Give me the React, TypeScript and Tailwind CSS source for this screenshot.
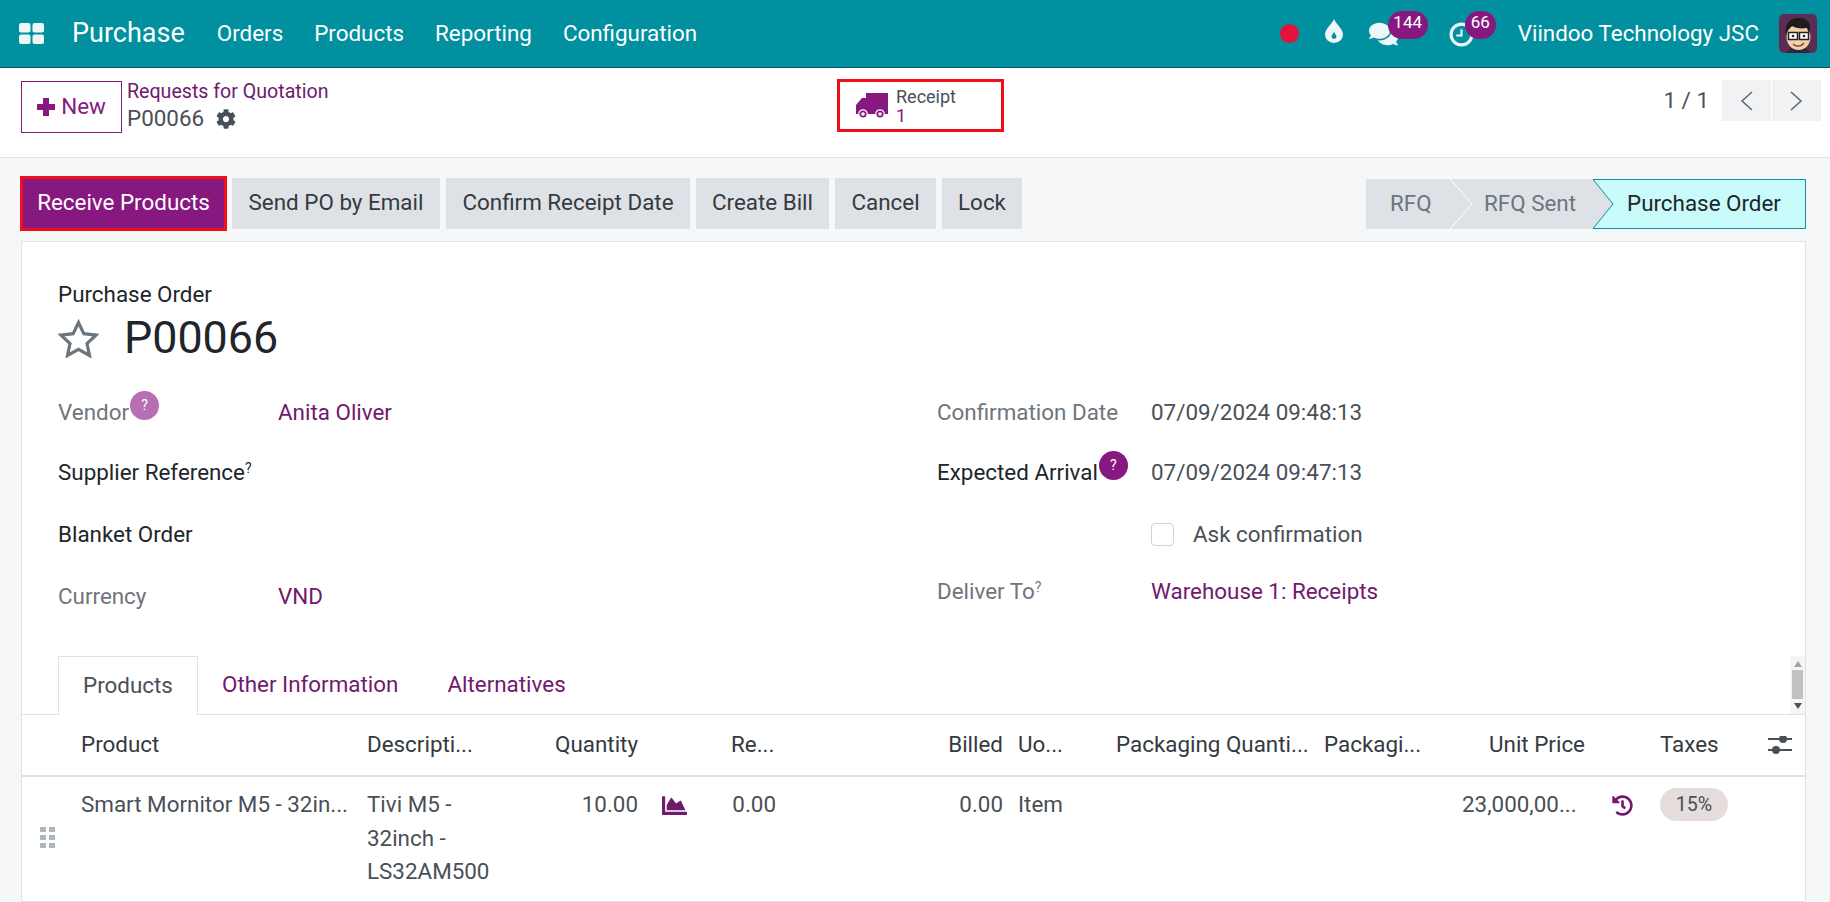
import { FaCog, FaComments, FaChartArea, FaHistory } from "react-icons/fa";

const tableCols =
  "grid grid-cols-[59px_286px_172px_99px_93px_45px_227px_113px_208px_138px_123px_75px_108px_37px]";

function HelpBadge({ faded }: { faded?: boolean }) {
  return (
    <span
      className={`ml-px mb-[16px] flex h-[29px] w-[29px] items-center justify-center rounded-full text-[14px] text-white ${
        faded ? "bg-[#b86fb2]" : "bg-[#87187f]"
      }`}
    >
      ?
    </span>
  );
}

function ActionButton({ label, className }: { label: string; className: string }) {
  return (
    <button className={`flex h-[51px] items-center justify-center bg-[#dee2e6] pb-[2px] text-[#343a40] ${className}`}>
      {label}
    </button>
  );
}

function Avatar() {
  return (
    <svg viewBox="0 0 38 39" className="h-[39px] w-[38px]">
      <rect width="38" height="39" rx="5" fill="#5b2d55" />
      <path d="M8 39c1-5 6-7 11-7s10 2 11 7z" fill="#3a2238" />
      <ellipse cx="19.5" cy="23" rx="12" ry="13" fill="#f5cfa8" />
      <path d="M7 21c-2-10 3-17 13-17 7 0 12 4 11 11l-1 5-2-6c-6 1-12 0-15-2-2 2-5 4-6 9z" fill="#1f1b1f" />
      <rect x="9.5" y="18.5" width="9" height="7" fill="#fff" stroke="#222" strokeWidth="1.5" />
      <rect x="20.5" y="18.5" width="9" height="7" fill="#fff" stroke="#222" strokeWidth="1.5" />
      <circle cx="14" cy="22" r="1.3" fill="#222" />
      <circle cx="25" cy="22" r="1.3" fill="#222" />
      <path d="M14 30c3 3 8 3 11-1" fill="none" stroke="#6b3a2a" strokeWidth="1.3" />
    </svg>
  );
}

function Chevron({ d }: { d: string }) {
  return (
    <svg viewBox="0 0 13 20" className="h-[20px] w-[13px]" fill="none" stroke="#5f666d" strokeWidth="1.5">
      <path d={d} />
    </svg>
  );
}

export default function App() {
  return (
    <div className="flex h-[902px] w-[1830px] flex-col overflow-hidden bg-[#f6f7f9] font-['Roboto',sans-serif] text-[22.4px] text-[#495057]">
      {/* Navbar */}
      <nav className="flex h-[68px] shrink-0 items-center border-b border-[#0b5560] bg-[#01909f] text-white">
        <svg viewBox="0 0 25 21" className="ml-[19px] h-[21px] w-[25px]" fill="#eef7f8">
          <rect width="11.5" height="9.5" rx="2" />
          <rect x="13.5" width="11.5" height="9.5" rx="2" />
          <rect y="11.5" width="11.5" height="9.5" rx="2" />
          <rect x="13.5" y="11.5" width="11.5" height="9.5" rx="2" />
        </svg>
        <span className="ml-[28px] text-[27px] leading-none">Purchase</span>
        <div className="ml-[32px] flex gap-[31px]">
          <span>Orders</span>
          <span>Products</span>
          <span>Reporting</span>
          <span>Configuration</span>
        </div>
        <div className="ml-auto flex items-center">
          <span className="h-[19px] w-[19px] rounded-full bg-[#e4113a]" />
          <svg viewBox="0 0 18 24" className="mb-[6px] ml-[26px] h-[24px] w-[18px]">
            <path d="M9 0c2 5 9 10 9 15.500a9 8.500 0 0 1-18 0C0 10 7 5 9 0z" fill="#eef7f8" />
            <path d="M9 13c1 2 2.500 3 2.500 4.500a2.500 2.500 0 0 1-5 0C6.500 16 8 15 9 13z" fill="#01909f" />
          </svg>
          <div className="relative ml-[26px] h-[28px] w-[59px]">
            <FaComments className="mt-[1px] h-[26px] w-[29px] text-[#eef7f8]" />
            <span className="absolute top-[-9px] left-[19px] flex h-[28px] w-[40px] items-center justify-center rounded-full bg-[#87187f] pb-[3px] text-[17px]">
              144
            </span>
          </div>
          <div className="relative ml-[21px] h-[28px] w-[47px]">
            <svg viewBox="0 0 24 24" className="mt-[2px] h-[25px] w-[25px]" fill="none" stroke="#eef7f8" strokeWidth="3">
              <circle cx="12" cy="12" r="10" />
              <path d="M12 7v6h-5" strokeWidth="2" />
            </svg>
            <span className="absolute top-[-9px] left-[16px] flex h-[28px] w-[31px] items-center justify-center rounded-full bg-[#87187f] pb-[3px] text-[17px]">
              66
            </span>
          </div>
          <span className="ml-[22px]">Viindoo Technology JSC</span>
          <span className="mr-[13px] ml-[20px]">
            <Avatar />
          </span>
        </div>
      </nav>

      {/* Control panel */}
      <header className="flex h-[90px] shrink-0 items-start border-b border-[#dfe2e6] bg-white pl-[21px]">
        <button className="mt-[13px] flex h-[52px] w-[101px] items-center justify-center border border-[#87187f] text-[#87187f]">
          <svg viewBox="0 0 18 18" className="h-[18px] w-[18px]" fill="currentColor">
            <path d="M6 0h6v6h6v6h-6v6H6v-6H0V6h6z" />
          </svg>
          <span className="ml-[6px]">New</span>
        </button>
        <div className="mt-[11px] ml-[5px] w-[710px]">
          <div className="text-[19.6px] leading-[26px] text-[#71196b]">Requests for Quotation</div>
          <div className="flex h-[27px] items-center">
            P00066
            <FaCog className="ml-[12px] h-[20px] w-[20px]" />
          </div>
        </div>
        <div className="mt-[11px] flex h-[53px] w-[167px] items-center border-[3px] border-[#ee0f1a] pl-[16px]">
          <svg viewBox="0 0 32 26" className="h-[26px] w-[32px]">
            <path d="M10 0h22v21H0v-9l6-7h4z" fill="#87187f" />
            <circle cx="7" cy="21" r="4.200" fill="#87187f" stroke="#fff" strokeWidth="1.200" />
            <circle cx="7" cy="21" r="1.800" fill="#fff" />
            <circle cx="24" cy="21" r="4.200" fill="#87187f" stroke="#fff" strokeWidth="1.200" />
            <circle cx="24" cy="21" r="1.800" fill="#fff" />
          </svg>
          <div className="ml-[8px] text-[18px] leading-[19px]">
            <div>Receipt</div>
            <div className="text-[#87187f]">1</div>
          </div>
        </div>
        <div className="mt-[12px] ml-auto flex items-center pr-[9px]">
          <span>1 / 1</span>
          <button className="ml-[13px] flex h-[41px] w-[49px] items-center justify-center bg-[#f1f2f3]">
            <Chevron d="M12 1L2 10l10 9" />
          </button>
          <button className="ml-px flex h-[41px] w-[49px] items-center justify-center bg-[#f1f2f3]">
            <Chevron d="M1 1l10 9-10 9" />
          </button>
        </div>
      </header>

      {/* Action buttons and status */}
      <div className="flex h-[83px] shrink-0 items-center pt-[8px] pl-[20px]">
        <button className="flex h-[55px] w-[207px] items-center justify-center border-[3px] border-[#ee0f1a] bg-[#87187f] pb-[2px] text-white">
          Receive Products
        </button>
        <ActionButton label="Send PO by Email" className="ml-[5px] w-[208px]" />
        <ActionButton label="Confirm Receipt Date" className="ml-[6px] w-[244px]" />
        <ActionButton label="Create Bill" className="ml-[6px] w-[133px]" />
        <ActionButton label="Cancel" className="ml-[6px] w-[101px]" />
        <ActionButton label="Lock" className="ml-[6px] w-[80px]" />
        <div className="relative mr-[24px] ml-auto flex h-[50px] w-[440px] items-center bg-[#dee2e6]">
          <span className="absolute left-[24px] text-[#6c757d]">RFQ</span>
          <svg viewBox="0 0 24 50" className="absolute left-[84px] h-[50px] w-[24px]" fill="none" stroke="#fff" strokeWidth="1">
            <path d="M0 0l22 25L0 50" />
          </svg>
          <span className="absolute left-[118px] text-[#6c757d]">RFQ Sent</span>
          <svg viewBox="0 0 213 50" className="absolute left-[227px] h-[50px] w-[213px]" fill="#c9fbfb" stroke="#0f8f9b" strokeWidth="1">
            <path d="M0 .5h212.500v49H0l20-24.500z" />
          </svg>
          <span className="absolute left-[261px] text-[#212529]">Purchase Order</span>
        </div>
      </div>

      {/* Sheet */}
      <main className="ml-[21px] flex h-[661px] w-[1785px] shrink-0 flex-col border border-[#dfe2e6] bg-white">
        <div className="mt-[40px] ml-[36px] leading-[24px] text-[#212529]">Purchase Order</div>
        <div className="mt-[7px] ml-[36px] flex h-[50px] items-center">
          <svg viewBox="0 0 41 39" className="h-[39px] w-[41px]" fill="none" stroke="#6c757d" strokeWidth="3.200">
            <path d="M20.500 3.500l5.300 11.200 12.200 1.400-9 8.400 2.500 12-11-6.200-11 6.200 2.500-12-9-8.400 12.200-1.400z" />
          </svg>
          <span className="ml-[25px] text-[44.8px] text-[#212529]">P00066</span>
        </div>

        <div className="mt-[20px] ml-[36px] grid h-[243px] grid-cols-[879px_1fr] grid-rows-[60px_60px_64px_59px]">
          <div className="grid grid-cols-[220px_1fr] items-center">
            <span className="flex items-center text-[#6f757c]">
              Vendor
              <HelpBadge faded />
            </span>
            <span className="text-[#71196b]">Anita Oliver</span>
          </div>
          <div className="grid grid-cols-[214px_1fr] items-center">
            <span className="text-[#6f757c]">Confirmation Date</span>
            <span>07/09/2024 09:48:13</span>
          </div>
          <div className="flex items-center text-[#212529]">
            <span>
              Supplier Reference<sup className="text-[14px]">?</sup>
            </span>
          </div>
          <div className="grid grid-cols-[214px_1fr] items-center">
            <span className="flex items-center text-[#212529]">
              Expected Arrival
              <HelpBadge />
            </span>
            <span>07/09/2024 09:47:13</span>
          </div>
          <div className="flex items-center text-[#212529]">Blanket Order</div>
          <div className="grid grid-cols-[214px_1fr] items-center">
            <span />
            <label className="flex items-center">
              <span className="h-[23px] w-[23px] rounded-[4px] border border-[#ced4da] bg-white" />
              <span className="ml-[19px]">Ask confirmation</span>
            </label>
          </div>
          <div className="grid grid-cols-[220px_1fr] items-center">
            <span className="text-[#6f757c]">Currency</span>
            <span className="text-[#71196b]">VND</span>
          </div>
          <div className="grid h-[50px] grid-cols-[214px_1fr] items-center">
            <span className="text-[#6f757c]">
              Deliver To<sup className="text-[14px]">?</sup>
            </span>
            <span className="text-[#71196b]">Warehouse 1: Receipts</span>
          </div>
        </div>

        {/* Tabs */}
        <div className="mt-[30px] flex h-[59px] shrink-0 border-b border-[#dfe2e6] pl-[36px]">
          <div className="flex h-[59px] w-[140px] items-center justify-center border-x border-t border-[#dfe2e6] bg-white">
            Products
          </div>
          <span className="ml-[24px] flex items-center text-[#71196b]">Other Information</span>
          <span className="ml-[49px] flex items-center text-[#71196b]">Alternatives</span>
          <div className="ml-auto flex w-[15px] flex-col items-center bg-[#f5f5f5]">
            <span className="mt-[5px] h-0 w-0 border-x-[4px] border-b-[6px] border-x-transparent border-b-[#a3a3a3]" />
            <span className="mt-[3px] h-[29px] w-[11px] bg-[#c1c1c1]" />
            <span className="mt-[4px] h-0 w-0 border-x-[4px] border-t-[6px] border-x-transparent border-t-[#505050]" />
          </div>
        </div>

        {/* Order lines */}
        <div className={`${tableCols} h-[62px] shrink-0 items-center border-b-2 border-[#dfe2e6] text-[#343a40]`}>
          <span />
          <span>Product</span>
          <span>Descripti...</span>
          <span className="text-right">Quantity</span>
          <span />
          <span className="whitespace-nowrap">Re...</span>
          <span className="text-right">Billed</span>
          <span className="pl-[15px]">Uo...</span>
          <span className="whitespace-nowrap">Packaging Quanti...</span>
          <span>Packagi...</span>
          <span className="text-right">Unit Price</span>
          <span />
          <span>Taxes</span>
          <svg viewBox="0 0 24 18" className="h-[18px] w-[24px]" fill="#495057">
            <rect y="2" width="24" height="2" />
            <rect y="13" width="24" height="2" />
            <circle cx="15" cy="3" r="4" />
            <circle cx="8" cy="14" r="4" />
          </svg>
        </div>
        <div className={`${tableCols} flex-1 items-start leading-[33.5px]`}>
          <svg viewBox="0 0 15 21" className="mt-[50px] ml-[18px] h-[21px] w-[15px]" fill="#adb5bd">
            <rect width="6" height="5" />
            <rect x="9" width="6" height="5" />
            <rect y="8" width="6" height="5" />
            <rect x="9" y="8" width="6" height="5" />
            <rect y="16" width="6" height="5" />
            <rect x="9" y="16" width="6" height="5" />
          </svg>
          <span className="mt-[11px] whitespace-nowrap">Smart Mornitor M5 - 32in...</span>
          <span className="mt-[11px]">
            Tivi M5 -<br />
            32inch -<br />
            LS32AM500
          </span>
          <span className="mt-[11px] text-right">10.00</span>
          <FaChartArea className="mt-[16px] ml-[24px] h-[25px] w-[25px] text-[#71196b]" />
          <span className="mt-[11px] text-right">0.00</span>
          <span className="mt-[11px] text-right">0.00</span>
          <span className="mt-[11px] pl-[15px]">Item</span>
          <span />
          <span />
          <span className="mt-[11px] whitespace-nowrap">23,000,00...</span>
          <FaHistory className="mt-[18px] ml-[27px] h-[21px] w-[21px] text-[#71196b]" />
          <span className="mt-[11px] flex h-[33px] w-[68px] items-center justify-center rounded-full bg-[#e5dcdc] text-[19.6px]">15%</span>
          <span />
        </div>
      </main>
    </div>
  );
}
